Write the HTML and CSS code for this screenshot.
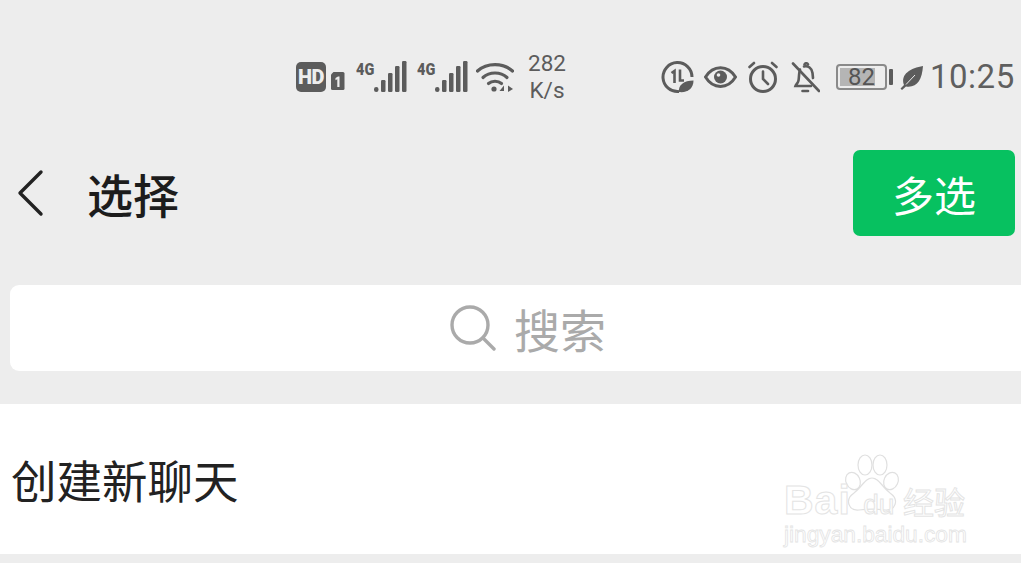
FILE: index.html
```html
<!DOCTYPE html>
<html lang="zh-CN">
<head>
  <meta charset="UTF-8">
  <meta name="viewport" content="width=device-width, initial-scale=1.0">
  <title>选择</title>
  <link rel="stylesheet" href="styles.css">
</head>
<body>
  <div class="status-bar">
    <span class="hd-badge">HD</span>
    <svg class="sim" width="15" height="20" viewBox="0 0 15 20"><path d="M1 3.500 3.500 1H13a1.500 1.500 0 0 1 1.500 1.500V17.500A1.500 1.500 0 0 1 13 19H2.500A1.500 1.500 0 0 1 1 17.500Z" fill="#5c5c5c"/><path d="M5.500 7 8 5.500h1.500V16H7.300V8.200L5.500 9.200Z" fill="#ededed"/></svg>
    <div class="signal">
      <span class="net">4G</span>
      <svg width="51" height="33" viewBox="0 0 51 33" fill="#5c5c5c"><rect x="18" y="27" width="4.500" height="5" rx="2.200"/><rect x="25" y="20" width="4.500" height="12" rx="1.200"/><rect x="32" y="13" width="4.500" height="19" rx="1.200"/><rect x="39" y="6" width="4.500" height="26" rx="1.200"/><rect x="46" y="1" width="4.500" height="31" rx="1.200"/></svg>
    </div>
    <div class="signal signal-2">
      <span class="net">4G</span>
      <svg width="51" height="33" viewBox="0 0 51 33" fill="#5c5c5c"><rect x="18" y="27" width="4.500" height="5" rx="2.200"/><rect x="25" y="20" width="4.500" height="12" rx="1.200"/><rect x="32" y="13" width="4.500" height="19" rx="1.200"/><rect x="39" y="6" width="4.500" height="26" rx="1.200"/><rect x="46" y="1" width="4.500" height="31" rx="1.200"/></svg>
    </div>
    <svg class="wifi" width="38" height="32" viewBox="0 0 38 32" fill="none" stroke="#5c5c5c" stroke-width="3.200" stroke-linecap="round"><path d="M1.500 10C11 1.500 27 1.500 36.500 10"/><path d="M7 16.500C13.500 10.500 24.500 10.500 31 16.500"/><path d="M12.500 22.500C16 19.500 22 19.500 25.500 22.500"/><circle cx="18" cy="28" r="2.600" fill="#5c5c5c" stroke="none"/><path d="M28 24.500 23.500 30H28Z" fill="#5c5c5c" stroke="none"/><path d="M32 24.500 37 28 32 31Z" fill="#5c5c5c" stroke="none"/></svg>
    <div class="speed"><span>282</span><span>K/s</span></div>

    <svg class="data-save" width="33" height="33" viewBox="0 0 33 33" fill="none" stroke="#5c5c5c" stroke-width="3"><path d="M18 30.500A14.500 14.500 0 1 1 31 16"/><path d="M10.500 12 13.500 10V22M19 8.500V19.500H23" stroke-width="2.600"/><path d="M18 31C17 24 23 19.500 32.500 19.500 32.500 27 27 32 18 31Z" fill="#5c5c5c" stroke="none"/></svg>
    <svg class="eye" width="33" height="24" viewBox="0 0 33 24" fill="none" stroke="#5c5c5c" stroke-width="3"><path d="M1.500 12C9 -0.500 24 -0.500 31.500 12 24 24.500 9 24.500 1.500 12Z"/><circle cx="16.500" cy="12" r="6.500" fill="#5c5c5c" stroke="none"/><circle cx="14.500" cy="10" r="1.800" fill="#ededed" stroke="none"/></svg>
    <svg class="alarm" width="32" height="32" viewBox="0 0 32 32" fill="none" stroke="#5c5c5c" stroke-width="3" stroke-linecap="round"><circle cx="16" cy="18" r="12.500"/><path d="M16 10.500V18L21 23M2.500 6 7 2M29.500 6 25 2" stroke-width="2.600"/></svg>
    <svg class="bell" width="29" height="31" viewBox="0 0 29 31" fill="none" stroke="#5c5c5c" stroke-width="2.600" stroke-linecap="round"><path d="M9 7.500C8 10 8 16 7.500 18.500 7 21 5 22.500 4.500 24H20M13 4.500C17 3.500 21 6 21.500 11L22 16"/><path d="M13.500 2.500C14.500 0.800 16 0.800 17 2.500"/><path d="M2 1.500 28 29"/><path d="M11.500 29H17"/></svg>
    <div class="battery">
      <div class="battery-body"><div class="battery-level" style="width: 82%"></div><span class="battery-num">82</span></div>
      <div class="battery-nib"></div>
    </div>
    <svg class="leaf" width="23" height="25" viewBox="0 0 23 25"><path d="M23 1C22 15 17 23 6 21.500L2 25 0.500 23.500 4 20C0 9 11 3 23 1Z" fill="#5c5c5c"/><path d="M6 19.500 15 10" stroke="#ededed" stroke-width="1" fill="none"/></svg>
    <span class="clock">10:25</span>
  </div>

  <div class="top-bar">
    <svg class="back" width="28" height="48" viewBox="0 0 28 48" fill="none" stroke="#222" stroke-width="3.400" stroke-linecap="round" stroke-linejoin="round"><path d="M24 3 3 24 24 45"/></svg>
    <div class="page-title">选择</div>
    <button class="multi-btn">多选</button>
  </div>

  <div class="search-box">
    <svg width="46" height="46" viewBox="0 0 46 46" fill="none" stroke="#aaa" stroke-width="3.400" stroke-linecap="round"><circle cx="20" cy="20" r="18"/><path d="M33 33 44 44"/></svg>
    <span class="search-text">搜索</span>
  </div>

  <div class="list">
    <div class="list-item">创建新聊天</div>
    <div class="watermark">
      <svg class="paw" width="56" height="60" viewBox="0 0 56 60" fill="#fff" stroke="#e0e0e0" stroke-width="1.200"><ellipse cx="9" cy="27" rx="7" ry="9" transform="rotate(-25 9 27)"/><ellipse cx="21" cy="11" rx="7" ry="10"/><ellipse cx="36" cy="11" rx="7" ry="10"/><ellipse cx="47" cy="27" rx="7" ry="9" transform="rotate(25 47 27)"/><path d="M28 24C35 24 38 33 46 39 56 46 51 57 41 56 33 55 23 55 15 56 5 57 0 46 10 39 18 33 21 24 28 24Z"/></svg>
      <div class="wm-row">
        <span class="wm-bai">Bai</span><span class="wm-du">du</span><span class="wm-cn">经验</span>
      </div>
      <div class="wm-url">jingyan.baidu.com</div>
    </div>
  </div>
</body>
</html>
```

FILE: styles.css
```css
html, body {
  margin: 0;
  padding: 0;
}
body {
  width: 1021px;
  height: 563px;
  overflow: hidden;
  background-color: #ededed;
  color: #222;
  font-family: "Noto Sans CJK SC", "Liberation Sans", sans-serif;
}

/* status bar */
.status-bar {
  display: flex;
  align-items: center;
  height: 54px;
  padding: 50px 0 46px 296px;
  color: #5c5c5c;
}
.hd-badge {
  width: 30px;
  height: 30px;
  border-radius: 5px;
  background-color: #5c5c5c;
  color: #ededed;
  font-family: "Roboto", sans-serif;
  font-size: 20px;
  font-weight: 900;
  line-height: 30px;
  text-align: center;
  letter-spacing: -0.5px;
}
.sim {
  margin-left: 4px;
  margin-top: 8px;
}
.signal {
  position: relative;
  width: 51px;
  height: 33px;
  margin-left: 11px;
  margin-top: -1px;
}
.signal-2 {
  margin-left: 10px;
}
.signal svg {
  display: block;
}
.net {
  position: absolute;
  left: 0;
  top: 0;
  font-family: "Roboto", sans-serif;
  font-size: 17px;
  font-weight: 900;
  line-height: 18px;
  transform: scaleX(0.85);
  transform-origin: left;
}
.wifi {
  margin-left: 8px;
}
.speed {
  display: flex;
  flex-direction: column;
  align-items: center;
  width: 40px;
  margin-left: 13px;
  font-family: "Roboto", sans-serif;
  font-size: 22.500px;
  line-height: 27px;
}
.data-save {
  margin-left: 94px;
}
.eye {
  margin-left: 10px;
}
.alarm {
  margin-left: 10px;
}
.bell {
  margin-left: 12px;
}
.battery {
  display: flex;
  align-items: center;
  margin-left: 16px;
}
.battery-body {
  position: relative;
  box-sizing: border-box;
  width: 51px;
  height: 26px;
  padding: 2px;
  border: 2px solid #8a8a8a;
  border-radius: 4px;
}
.battery-level {
  height: 100%;
  background-color: #b5b5b5;
}
.battery-num {
  position: absolute;
  left: 0;
  right: 0;
  top: 0;
  font-family: "Roboto", sans-serif;
  font-size: 24px;
  line-height: 22px;
  text-align: center;
  color: #555;
}
.battery-nib {
  width: 4px;
  height: 16px;
  margin-left: 2px;
  border-radius: 1px;
  background-color: #5c5c5c;
}
.leaf {
  margin-left: 7px;
}
.clock {
  margin-left: 7px;
  font-family: "Roboto", sans-serif;
  font-size: 33px;
  line-height: 40px;
  letter-spacing: 0.5px;
  color: #5f5f5f;
}

/* title row */
.top-bar {
  display: flex;
  align-items: center;
  height: 86px;
  padding: 0 6px 0 17px;
}
.back {
  flex: none;
}
.page-title {
  flex: 1;
  margin-left: 42px;
  font-size: 46px;
  font-weight: 500;
  line-height: 86px;
  color: #1c1c1c;
}
.multi-btn {
  width: 162px;
  height: 86px;
  border: none;
  border-radius: 7px;
  background-color: #07c160;
  color: #fff;
  font-family: inherit;
  font-size: 42px;
  padding: 0;
}

/* search */
.search-box {
  display: flex;
  align-items: center;
  justify-content: center;
  gap: 18px;
  height: 86px;
  margin: 49px -20px 0 10px;
  padding-left: 5px;
  border-radius: 9px;
  background-color: #fff;
}
.search-text {
  font-size: 46px;
  color: #aaa;
}

/* list */
.list {
  position: relative;
  height: 150px;
  margin-top: 33px;
  background-color: #fff;
}
.list-item {
  padding-left: 11px;
  font-size: 45.500px;
  line-height: 150px;
  color: #222;
}
.watermark {
  position: absolute;
  left: 784px;
  top: 48px;
  width: 190px;
}
.paw {
  position: absolute;
  left: 60px;
  top: 2px;
}
.wm-row {
  position: relative;
  display: flex;
  align-items: baseline;
  height: 44px;
  padding-top: 26px;
  font-family: "Liberation Sans", sans-serif;
  color: #fff;
  -webkit-text-stroke: 1px #e4e4e4;
}
.wm-bai {
  font-size: 41px;
  font-weight: 700;
  line-height: 44px;
  letter-spacing: 1px;
}
.wm-du {
  width: 56px;
  font-size: 28px;
  text-align: center;
}
.wm-cn {
  font-size: 31px;
  line-height: 44px;
  margin-left: -4px;
}
.wm-url {
  position: relative;
  font-family: "Liberation Sans", sans-serif;
  font-size: 22.700px;
  line-height: 24px;
  color: #fff;
  -webkit-text-stroke: 0.8px #e4e4e4;
}
```
